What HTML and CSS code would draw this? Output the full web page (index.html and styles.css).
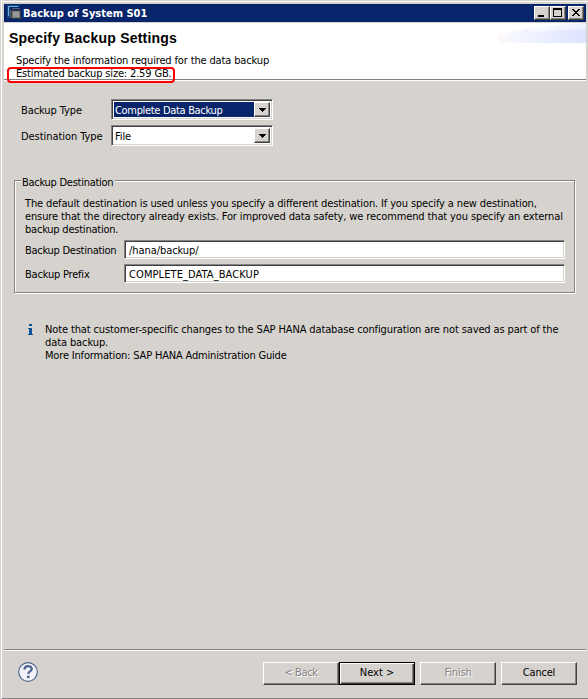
FILE: index.html
```html
<!DOCTYPE html>
<html lang="en">
<head>
<meta charset="utf-8">
<title>Backup of System S01</title>
<link rel="stylesheet" href="styles.css">
</head>
<body>
<div class="window">
  <header class="titlebar">
    <svg class="app-icon" width="16" height="16" viewBox="0 0 16 16">
      <path d="M0 0H13V2H3V13H0Z" fill="#16487c"/><path d="M1 1H11V2H2V11H1Z" fill="#6caee0"/>
      <path d="M6 3v12M8 3v12M10 3v12M12 3v12M3 6h12M3 8h12M3 10h12M3 12h12" stroke="#a79a7d" stroke-dasharray="1 1"/>
      <rect x="4" y="5" width="10" height="9" fill="#34383d"/><rect x="5" y="6" width="8" height="7" fill="#777"/><rect x="6" y="7" width="6" height="5" fill="#999"/>
    </svg>
    <span class="title">Backup of System S01</span>
    <span class="controls">
      <span class="ctl"><svg width="14" height="12" viewBox="0 0 14 12"><path d="M3 8h6v2H3z"/></svg></span>
      <span class="ctl"><svg width="14" height="12" viewBox="0 0 14 12"><path fill-rule="evenodd" d="M2 1h9v9H2zM3 3v6h7V3z"/></svg></span>
      <span class="ctl close"><svg width="14" height="12" viewBox="0 0 14 12"><path d="M3 2h2v1h1v1h2V3h1V2h2v1h-1v1H9v1H8v1h1v1h1v1h1v1H9V8H8V7H6v1H5v1H3V8h1V7h1V6h1V5H5V4H4V3H3z"/></svg></span>
    </span>
  </header>
  <section class="banner">
    <h1 class="heading">Specify Backup Settings</h1>
    <p class="t-intro">Specify the information required for the data backup</p>
    <p class="t-size">Estimated backup size: 2.59 GB.</p>
    <svg class="swoosh" width="88" height="20" viewBox="0 0 88 20"><defs><linearGradient id="g"><stop offset="0" stop-color="#fff8fb"/><stop offset=".2" stop-color="#f4f6ff"/><stop offset="1" stop-color="#dde4ff"/></linearGradient></defs><path d="M0 12Q35 3 88 0V20H0Z" fill="url(#g)"/><path d="M30 5Q58 1 88 0V6Q58 7 30 10Z" fill="#fff" opacity=".5"/></svg>
    <span class="mark"></span>
  </section>
  <main class="content">
    <div class="row"><span class="label t-btype">Backup Type</span><div class="combo"><span class="value selected t-complete">Complete Data Backup</span><span class="drop"><svg width="7" height="4" viewBox="0 0 7 4"><path d="M0 0h7v1H6v1H5v1H4v1H3V3H2V2H1V1H0z"/></svg></span></div></div>
    <div class="row"><span class="label t-dtype">Destination Type</span><div class="combo"><span class="value t-file">File</span><span class="drop"><svg width="7" height="4" viewBox="0 0 7 4"><path d="M0 0h7v1H6v1H5v1H4v1H3V3H2V2H1V1H0z"/></svg></span></div></div>
    <section class="group">
      <h2 class="legend t-dest">Backup Destination</h2>
      <p class="t-p1">The default destination is used unless you specify a different destination. If you specify a new destination,</p>
      <p class="t-p2">ensure that the directory already exists. For improved data safety, we recommend that you specify an external</p>
      <p class="t-p3">backup destination.</p>
      <div class="field"><span class="field-label t-dest">Backup Destination</span><div class="input t-path">/hana/backup/</div></div>
      <div class="field"><span class="field-label t-prefix">Backup Prefix</span><div class="input t-caps">COMPLETE_DATA_BACKUP</div></div>
    </section>
    <section class="note">
      <svg class="info" width="5" height="12" viewBox="0 0 5 12"><path d="M1 0h3v2H1zM0 4h4v6h1v1H0v-1h1V5H0z" fill="#0b5497"/></svg>
      <div>
        <p class="t-n1">Note that customer-specific changes to the SAP HANA database configuration are not saved as part of the</p>
        <p class="t-n2">data backup.</p>
        <p class="t-n3">More Information: SAP HANA Administration Guide</p>
      </div>
    </section>
  </main>
  <footer class="footer">
    <svg class="help" width="20" height="20" viewBox="0 0 20 20"><circle cx="10" cy="10" r="9.3" fill="#f3f2f6" stroke="#536a91" stroke-width="1.2"/><path d="M6.5 7.4C6.5 3 13.7 3 13.7 7C13.7 9.5 10.3 9.2 10.3 12" fill="none" stroke="#4d658f" stroke-width="2.3"/><rect x="9" y="13.7" width="2.6" height="2.4" fill="#4d658f"/></svg>
    <div class="buttons">
      <span class="btn disabled t-back">&lt; Back</span><span class="btn default">Next &gt;</span><span class="btn disabled spaced t-finish">Finish</span><span class="btn spaced t-cancel">Cancel</span>
    </div>
  </footer>
</div>
</body>
</html>
```

FILE: styles.css
```css
* { box-sizing: border-box; }
body { margin: 0; background: #d6d3ce; color: #000; font: 11px/13px "DejaVu Sans Condensed", "DejaVu Sans", sans-serif; font-stretch: condensed; }
h1, h2, p { margin: 0; font: inherit; white-space: nowrap; }
svg { display: block; }
.window { height: 699px; margin-left: 1px; padding: 4px 2px 0; border-left: 1px solid #fff; border-bottom: 1px solid #848284; display: flex; flex-direction: column; box-shadow: inset 0 1px #d6d3ce, inset 0 2px #fff; }
.titlebar { height: 18px; display: flex; align-items: center; background: #08246b; color: #fff; padding: 0 2px 0 3px; }
.title { font-weight: bold; }
.controls { display: flex; margin-left: auto; }
.ctl { width: 16px; height: 14px; background: #d6d3ce; border: 1px solid; border-color: #fff #424142 #424142 #fff; box-shadow: inset -1px -1px #848284; }
.close { margin-left: 2px; }
.banner { position: relative; height: 58px; margin-top: 1px; background: #fff; border-bottom: 1px solid #fff; box-shadow: inset 0 -1px #848284; padding: 6px 0 0 12px; }
.heading { font: bold 14px/18px "Liberation Sans", Arial, sans-serif; letter-spacing: .2px; margin: 0 0 7px -7px; }
.swoosh { position: absolute; right: 0; top: 0; }
.mark { position: absolute; left: 3px; top: 44px; width: 168px; height: 16px; border: 2px solid #f00; border-radius: 4px; z-index: 1; }
.content { flex: 1; padding: 18px 11px 0 10px; }
.row { display: flex; align-items: center; height: 21px; margin-bottom: 5px; padding-left: 7px; }
.label { width: 90px; padding-top: 2px; white-space: nowrap; }
.combo { width: 162px; height: 21px; display: flex; background: #fff; border: 1px solid; border-color: #848284 #fff #fff #848284; box-shadow: inset 1px 1px #424142, inset -1px -1px #d6d3ce; padding: 2px; }
.value { flex: 1; line-height: 17px; padding-left: 1px; white-space: nowrap; }
.selected { background: #08246b; color: #fff; }
.drop { width: 16px; display: flex; align-items: center; justify-content: center; background: #d6d3ce; border: 1px solid; border-color: #fff #424142 #424142 #fff; box-shadow: inset -1px -1px #848284; }
.group { position: relative; margin-top: 34px; height: 113px; border: 1px solid #848284; box-shadow: 1px 1px #fff, inset 1px 1px #fff; padding: 16px 9px 0 10px; }
.legend { position: absolute; left: 6px; top: -5px; padding: 0 2px 0 1px; background: #d6d3ce; }
.field { display: flex; height: 19px; margin-top: 4px; }
.field + .field { margin-top: 5px; }
.field-label { width: 99px; padding-top: 4px; white-space: nowrap; }
.input { flex: 1; height: 19px; background: #fff; border: 1px solid; border-color: #848284 #fff #fff #848284; box-shadow: inset 1px 1px #424142, inset -1px -1px #d6d3ce; padding: 3px 0 0 4px; }
.note { display: flex; margin-top: 30px; padding-left: 14px; }
.info { margin: 1px 12px 0 0; }
.footer { height: 49px; border-top: 1px solid #848284; box-shadow: inset 0 1px #fff; display: flex; padding: 12px 9px 0 14px; }
.buttons { display: flex; margin-left: auto; }
.btn { width: 76px; height: 23px; text-align: center; line-height: 20px; border: 1px solid; border-color: #fff #424142 #424142 #fff; box-shadow: inset -1px -1px #848284; }
.default { border-color: #000; box-shadow: inset 1px 1px #fff, inset -1px -1px #424142, inset -2px -2px #848284; }
.spaced { margin-left: 5px; }
.disabled { color: #848284; text-shadow: 1px 1px #fff; }
.t-intro { letter-spacing: -.146px; }
.t-size { letter-spacing: -.16px; }
.t-btype { letter-spacing: -.09px; }
.t-dtype { letter-spacing: -.06px; }
.t-complete { letter-spacing: -.32px; }
.t-file { letter-spacing: -.1px; }
.t-dest { letter-spacing: -.27px; }
.t-p1 { letter-spacing: -.138px; }
.t-p2 { letter-spacing: -.123px; }
.t-p3 { letter-spacing: -.22px; }
.t-path { letter-spacing: -.07px; }
.t-prefix { letter-spacing: -.2px; }
.t-caps { letter-spacing: .09px; }
.t-n1 { letter-spacing: -.126px; }
.t-n2 { letter-spacing: -.1px; }
.t-n3 { letter-spacing: -.175px; }
.t-back { letter-spacing: -.4px; }
.t-finish { letter-spacing: -.18px; }
.t-cancel { letter-spacing: -.2px; }
```
